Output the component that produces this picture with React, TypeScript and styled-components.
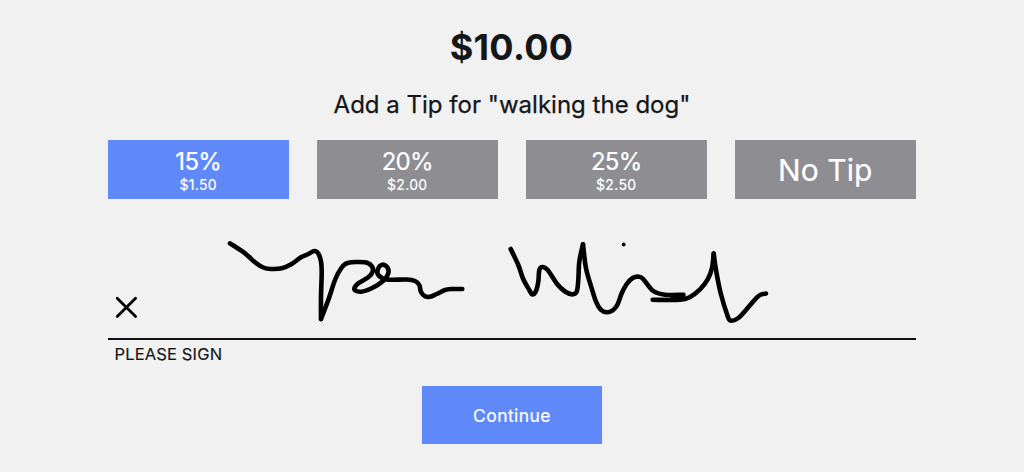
import React from 'react';
import styled, { createGlobalStyle } from 'styled-components';

const GlobalStyle = createGlobalStyle`
  * { box-sizing: border-box; }
  body { margin: 0; background: #f1f1f1; }
`;

const Page = styled.main`
  width: 1024px;
  height: 472px;
  display: flex;
  flex-direction: column;
  align-items: center;
  background: #f1f1f1;
  color: #151617;
  font-family: Inter, 'Liberation Sans', sans-serif;
`;

const Amount = styled.h1`
  margin: 25px 1px 0 0;
  font-size: 36px;
  line-height: 44px;
  font-weight: 700;
  letter-spacing: 0.3px;
`;

const Prompt = styled.p`
  margin: 21px 0 0;
  font-size: 24px;
  line-height: 30px;
  font-weight: 400;
  letter-spacing: 0.01px;
  -webkit-text-stroke: 0.25px currentColor;
  white-space: nowrap;
`;

const TipRow = styled.div`
  width: 807.5px;
  margin: 20px 0.5px 0 0;
  display: grid;
  grid-template-columns: repeat(4, 180.5px);
  justify-content: space-between;
`;

const Button = styled.button<{ $primary?: boolean }>`
  display: flex;
  flex-direction: column;
  align-items: center;
  justify-content: center;
  height: 59px;
  padding: 0;
  border: 0;
  border-radius: 0;
  font: inherit;
  font-weight: 400;
  -webkit-text-stroke: 0.2px currentColor;
  color: #fff;
  background: ${({ $primary }) => ($primary ? '#5f89f9' : '#8e8d92')};
`;

const Percent = styled.span`
  padding-top: 2px;
  font-size: 24px;
  line-height: 26px;
  letter-spacing: -0.7px;
`;

const TipValue = styled.span`
  margin: 1px 0 -1px;
  font-size: 14px;
  line-height: 18px;
  letter-spacing: 0.35px;
`;

const NoTip = styled.span`
  font-size: 30px;
  line-height: 36px;
  letter-spacing: 0.05px;
`;

const SignArea = styled.section`
  width: 807.5px;
  height: 142px;
  margin: 31px 0.5px 14px 0;
`;

const Ink = styled.svg`
  display: block;
  width: 807px;
  height: 108px;
  overflow: visible;
`;

const SignLabel = styled.div`
  height: 34px;
  padding: 2px 0 0 6.5px;
  border-top: 2.4px solid #111;
  font-size: 16.5px;
  line-height: 24px;
  font-weight: 400;
  letter-spacing: 0.15px;
  -webkit-text-stroke: 0.15px currentColor;
`;

const ContinueButton = styled(Button)`
  width: 180px;
  height: 58px;
  font-size: 17.5px;
  letter-spacing: 0.45px;
`;

type Point = [number, number];

const firstName: Point[] = [
  [230, 243.3], [245, 253.3], [255, 262.3], [263.3, 267.5], [271, 269], [281.7, 268.3],
  [291.7, 264], [301, 257.3], [308.3, 254], [314.3, 251], [318.3, 253.5], [321, 261.5],
  [321.7, 273], [321, 297], [321, 319],
];

const firstNameEnd: Point[] = [
  [321, 319], [328.3, 300], [335, 280], [340.7, 269], [347.5, 263], [365, 262.3],
  [371.7, 266], [372.7, 271.7], [368.3, 277.3], [358.3, 283.3], [354.3, 289.3], [361, 291.7],
  [371.7, 288.3], [383.3, 280.7], [388.3, 273.3], [387.3, 267.3], [382.3, 264.7], [378, 269],
  [378.3, 275], [386.7, 279.5], [406.7, 279.5], [415, 281], [419.3, 285], [421, 292],
  [425, 296.3], [430, 296.8], [436.7, 294], [445, 290], [451.7, 289], [462.3, 289],
];

const lastName: Point[] = [
  [510.7, 249], [518.3, 265], [523.3, 279.3], [529.3, 290], [532.3, 294.5], [536, 291],
  [538.3, 281.7], [539.3, 270], [542.3, 267], [547.7, 270], [557.3, 284.3], [565, 291.5],
  [572.3, 294.4], [576.7, 291.7], [578.3, 280], [579.3, 261.7], [583, 244.3],
];

const lastNameMiddle: Point[] = [
  [583, 244.3], [586, 268.3], [591.7, 288.3], [596, 301.7], [600.7, 309.7], [606.7, 312.3],
  [612.7, 310.3], [617.3, 305], [621.7, 293.3], [626.7, 284], [632.7, 278], [638.3, 276.7],
  [643, 278.8], [653.3, 291], [665, 294.7], [683.5, 294.7],
];

const lastNameEnd: Point[] = [
  [652.7, 299.8], [680, 299.8], [690, 297], [700, 289.3], [707.7, 279.3], [712, 268], [713.7, 253.5],
];

const flourish: Point[] = [
  [713.7, 253.5], [716, 270], [720.7, 293.3], [727.3, 315], [730.5, 320.5], [738.3, 318],
  [748.3, 307.3], [756.7, 297.7], [761, 294.5], [766, 293.6],
];

/* Passes a smooth curve through every sampled pen position. */
const curve = (points: Point[]) =>
  points.slice(1).reduce((d, p, i) => {
    const a = points[Math.max(i - 1, 0)];
    const b = points[i];
    const c = points[Math.min(i + 2, points.length - 1)];
    return `${d} C${b[0] + (p[0] - a[0]) / 6} ${b[1] + (p[1] - a[1]) / 6} ${p[0] - (c[0] - b[0]) / 6} ${p[1] - (c[1] - b[1]) / 6} ${p[0]} ${p[1]}`;
  }, `M${points[0][0]} ${points[0][1]}`);

const strokes = [firstName, firstNameEnd, lastName, lastNameMiddle, lastNameEnd, flourish];

const tips = [
  { percent: '15%', value: '$1.50', selected: true },
  { percent: '20%', value: '$2.00', selected: false },
  { percent: '25%', value: '$2.50', selected: false },
];

export default function App() {
  return (
    <>
      <GlobalStyle />
      <Page>
        <Amount>$10.00</Amount>
        <Prompt>Add a Tip for "walking the dog"</Prompt>
        <TipRow>
          {tips.map((tip) => (
            <Button key={tip.percent} $primary={tip.selected}>
              <Percent>{tip.percent}</Percent>
              <TipValue>{tip.value}</TipValue>
            </Button>
          ))}
          <Button>
            <NoTip>No Tip</NoTip>
          </Button>
        </TipRow>
        <SignArea>
          <Ink viewBox="108 230 807 108" fill="none" stroke="#000" strokeLinecap="round" strokeLinejoin="round">
            <path d="M117.2 298.2L135.6 316.6M135.6 298.2L117.2 316.6" strokeWidth="2.8" />
            {strokes.map((points, i) => (
              <path key={i} d={curve(points)} strokeWidth="4.6" />
            ))}
            <path d="M672 297.4H683" strokeWidth="4" />
            <circle cx="623.7" cy="244.5" r="1.9" fill="#000" stroke="none" />
          </Ink>
          <SignLabel>PLEASE SIGN</SignLabel>
        </SignArea>
        <ContinueButton $primary>Continue</ContinueButton>
      </Page>
    </>
  );
}
